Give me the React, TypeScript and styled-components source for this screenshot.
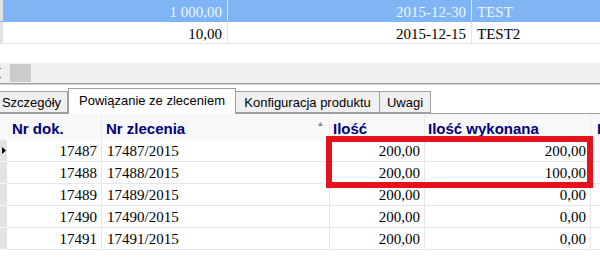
import React from "react";
import styled, { createGlobalStyle } from "styled-components";

const GlobalStyle = createGlobalStyle`
  html, body {
    margin: 0;
    padding: 0;
    background: #fff;
  }
  body {
    width: 600px;
    height: 257px;
    overflow: hidden;
  }
`

const Screen = styled.div`
  position: relative;
  width: 600px;
  height: 257px;
  overflow: hidden;
  background: #fff;
  display: flex;
  flex-direction: column;
`

/* ---------- upper grid ---------- */

const TopGrid = styled.div`
  height: 63px;
  font-family: "Liberation Serif", "Times New Roman", serif;
  font-size: 15px;
`

const TopRow = styled.div<{ $selected?: boolean }>`
  display: grid;
  grid-template-columns: 3px 225px 244px 1fr;
  height: 22px;
  box-sizing: border-box;
  overflow: hidden;
  background: ${p => (p.$selected ? "#80b5f5" : "#fff")};
  color: ${p => (p.$selected ? "#eef5ff" : "#000")};
  border-bottom: 1px solid ${p => (p.$selected ? "#80b5f5" : "#e4e4e4")};
`

const TopIndicator = styled.div`
  background: #e2e2e2;
`

const TopCell = styled.div<{ $align?: "left" | "right"; $selected?: boolean }>`
  padding: 1px 5px 0;
  line-height: 23px;
  white-space: nowrap;
  text-align: ${p => p.$align || "left"};
  border-right: 1px solid ${p => (p.$selected ? "#d6e7fd" : "#e4e4e4")};
  &:last-child {
    border-right: none;
  }
`

/* ---------- splitter / scroll strip ---------- */

const ScrollStrip = styled.div`
  height: 20px;
  background: #f0f0f0;
  display: flex;
  align-items: center;
  border-bottom: 1px solid #9c9c9c;
  box-shadow: 0 1px 0 #d4d4d4;
`

const Grip = styled.div`
  width: 2px;
  height: 14px;
  display: flex;
  flex-direction: column;
  justify-content: space-between;
  padding: 2px 0;
  box-sizing: border-box;
  & > span {
    width: 1px;
    height: 1px;
    background: #606060;
  }
`

const Thumb = styled.div`
  margin-left: 8px;
  width: 21px;
  height: 18px;
  background: #cbcbcb;
`

/* ---------- tabs ---------- */

const TabBar = styled.div`
  height: 27px;
  margin-top: 2px;
  display: flex;
  align-items: flex-end;
  border-bottom: 1px solid #a0a0a0;
  font-family: "Liberation Sans", Arial, sans-serif;
  font-size: 13px;
`

const Tab = styled.div<{ $active?: boolean; $w: number; $shift?: number }>`
  width: ${p => p.$w}px;
  margin-left: ${p => p.$shift || 0}px;
  height: ${p => (p.$active ? 26 : 22)}px;
  margin-bottom: ${p => (p.$active ? -1 : 0)}px;
  box-sizing: border-box;
  display: flex;
  align-items: center;
  justify-content: center;
  white-space: nowrap;
  color: #000;
  background: ${p => (p.$active ? "#fff" : "#f0f0f0")};
  border: 1px solid #a0a0a0;
  border-bottom: ${p => (p.$active ? "none" : "1px solid #a0a0a0")};
  border-left: ${p => (p.$active ? "1px solid #a0a0a0" : "none")};
  padding-bottom: ${p => (p.$active ? 3 : 0)}px;
`

/* ---------- lower grid ---------- */

const COLS = "7px 95px 228px 95px 166px 1fr"

const HeaderRow = styled.div`
  display: grid;
  grid-template-columns: ${COLS};
  height: 26px;
  background: #f8f8f8;
  font-family: "Liberation Sans", Arial, sans-serif;
  font-size: 15px;
  font-weight: bold;
  color: #000080;
`

const HeaderCell = styled.div<{ $pad?: number }>`
  display: flex;
  align-items: center;
  justify-content: space-between;
  padding-top: 3px;
  padding-left: ${p => p.$pad ?? 4}px;
  padding-right: 6px;
  white-space: nowrap;
  overflow: hidden;
  border-right: 1px solid #ececec;
`

const SortArrow = styled.svg`
  width: 5px;
  height: 4px;
  margin-bottom: 10px;
  flex: none;
`

const DataRow = styled.div`
  display: grid;
  grid-template-columns: ${COLS};
  height: 22px;
  box-sizing: border-box;
  border-bottom: 1px solid #e6e6e6;
  font-family: "Liberation Serif", "Times New Roman", serif;
  font-size: 15px;
  color: #000;
`

const RowIndicator = styled.div`
  background: #e3e3e3;
  border-bottom: 1px solid #fafafa;
  display: flex;
  align-items: center;
  padding-left: 2px;
`

const DataCell = styled.div<{ $align?: "left" | "right" }>`
  padding: 0 4px 0 5px;
  line-height: 22px;
  text-align: ${p => p.$align || "left"};
  white-space: nowrap;
  border-right: 1px solid #e6e6e6;
`

const Highlight = styled.div`
  position: absolute;
  left: 326px;
  top: 136px;
  width: 267px;
  height: 52px;
  box-sizing: border-box;
  border: 6px solid #e3121d;
  pointer-events: none;
`

const topRows = [
  { value: "1 000,00", date: "2015-12-30", name: "TEST", selected: true },
  { value: "10,00", date: "2015-12-15", name: "TEST2", selected: false },
]

const rows = [
  { nr: "17487", order: "17487/2015", qty: "200,00", done: "200,00" },
  { nr: "17488", order: "17488/2015", qty: "200,00", done: "100,00" },
  { nr: "17489", order: "17489/2015", qty: "200,00", done: "0,00" },
  { nr: "17490", order: "17490/2015", qty: "200,00", done: "0,00" },
  { nr: "17491", order: "17491/2015", qty: "200,00", done: "0,00" },
]

const App = () => {
  return <Screen>
    <GlobalStyle />
    <TopGrid>
      {topRows.map(r => (
        <TopRow key={r.name} $selected={r.selected}>
          <TopIndicator />
          <TopCell $align="right" $selected={r.selected}>{r.value}</TopCell>
          <TopCell $align="right" $selected={r.selected}>{r.date}</TopCell>
          <TopCell $selected={r.selected}>{r.name}</TopCell>
        </TopRow>
      ))}
    </TopGrid>

    <ScrollStrip>
      <Grip><span /><span /></Grip>
      <Thumb />
    </ScrollStrip>

    <TabBar>
      <Tab $w={72} $shift={-4}>Szczegóły</Tab>
      <Tab $w={168} $active>Powiązanie ze zleceniem</Tab>
      <Tab $w={144}>Konfiguracja produktu</Tab>
      <Tab $w={51}>Uwagi</Tab>
    </TabBar>

    <HeaderRow>
      <div />
      <HeaderCell $pad={5}>Nr dok.</HeaderCell>
      <HeaderCell>
        <span>Nr zlecenia</span>
        <SortArrow viewBox="0 0 5 4">
          <path d="M2.5 0 L5 4 L0 4 Z" fill="#8a8a8a" />
        </SortArrow>
      </HeaderCell>
      <HeaderCell $pad={3}>Ilość</HeaderCell>
      <HeaderCell $pad={3}>Ilość wykonana</HeaderCell>
      <HeaderCell $pad={6}>D</HeaderCell>
    </HeaderRow>

    {rows.map((r, i) => (
      <DataRow key={r.nr}>
        <RowIndicator>
          {i === 0 && (
            <svg width="4" height="7" viewBox="0 0 4 7">
              <path d="M0 0 L4 3.5 L0 7 Z" fill="#000" />
            </svg>
          )}
        </RowIndicator>
        <DataCell $align="right">{r.nr}</DataCell>
        <DataCell>{r.order}</DataCell>
        <DataCell $align="right">{r.qty}</DataCell>
        <DataCell $align="right">{r.done}</DataCell>
        <DataCell />
      </DataRow>
    ))}

    <Highlight />
  </Screen>
}

export default App
